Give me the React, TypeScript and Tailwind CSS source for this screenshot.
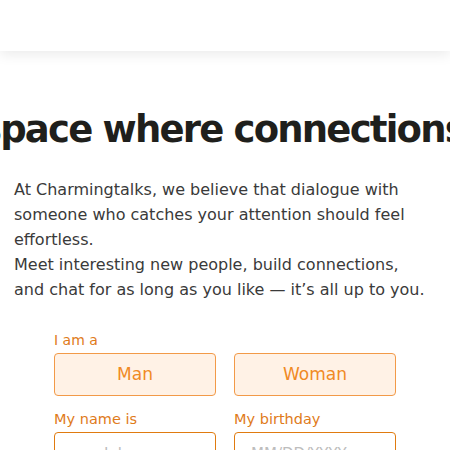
export default function App() {
  return (
    <div className="min-h-screen bg-white overflow-hidden" style={{ fontFamily: '"DejaVu Sans", sans-serif' }}>
      {/* Top bar */}
      <header className="h-[51px] bg-white shadow-[0_4px_12px_rgba(0,0,0,0.08)]"></header>

      <main className="pt-[57px]">
        <div className="overflow-hidden">
          <h1 className="whitespace-nowrap -ml-[58px] text-[37px] leading-[44px] font-bold text-[#1f1f1c] tracking-[-1.8px]">
            A space where connections happen
          </h1>
        </div>

        <p className="mt-[25px] px-[14px] w-[440px] text-[16px] leading-[25px] text-[#3a3a3a]">
          At Charmingtalks, we believe that dialogue with someone who catches your attention should feel effortless.
          <br />
          Meet interesting new people, build connections, and chat for as long as you like — it’s all up to you.
        </p>

        <form className="mx-auto mt-[30px] w-[342px]">
          <label className="block text-[14px] leading-[17px] text-[#e07b1a]">I am a</label>
          <div className="mt-[4px] grid grid-cols-2 gap-[18px]">
            <button type="button" className="h-[43px] rounded-[4px] border border-[#f29a48] bg-[#fff2e6] text-[17px] text-[#f08a24]">
              Man
            </button>
            <button type="button" className="h-[43px] rounded-[4px] border border-[#f29a48] bg-[#fff2e6] text-[17px] text-[#f08a24]">
              Woman
            </button>
          </div>

          <div className="mt-[15px] grid grid-cols-2 gap-[18px]">
            <div>
              <label className="block text-[14.5px] leading-[17px] text-[#e07b1a]">My name is</label>
              <input
                placeholder="e.g. John"
                className="mt-[4px] h-[43px] w-full rounded-[4px] border border-[#e07b10] bg-white pl-4 text-[15px] placeholder:text-[#bdbdbd]"
              />
            </div>
            <div>
              <label className="block text-[14.5px] leading-[17px] text-[#e07b1a]">My birthday</label>
              <input
                placeholder="MM/DD/YYYY"
                className="mt-[4px] h-[43px] w-full rounded-[4px] border border-[#e07b10] bg-white pl-4 text-[15px] placeholder:text-[#bdbdbd]"
              />
            </div>
          </div>
        </form>
      </main>
    </div>
  );
}
